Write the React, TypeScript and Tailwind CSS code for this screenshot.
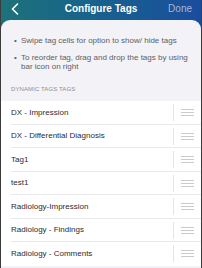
import React from 'react';

const tags = [
  'DX - Impression',
  'DX - Differential Diagnosis',
  'Tag1',
  'test1',
  'Radiology-Impression',
  'Radiology - Findings',
  'Radiology - Comments',
];

const DragHandle: React.FC = () => (
  <svg width="13" height="7" viewBox="0 0 13 7" className="block">
    <rect x="0" y="0" width="13" height="1" fill="#c9c9ce" />
    <rect x="0" y="3" width="13" height="1" fill="#c9c9ce" />
    <rect x="0" y="6" width="13" height="1" fill="#c9c9ce" />
  </svg>
);

export default function App() {
  return (
    <div
      className="w-[202px] h-[268px] overflow-hidden bg-gradient-to-r from-[#1e727a] to-[#1b4c9e] border-x border-[#3c3c3c]"
      style={{ fontFamily: '"Liberation Sans", Arial, sans-serif' }}
    >
      {/* header */}
      <div className="relative h-[20px] flex items-center justify-center">
        <svg width="8" height="12" viewBox="0 0 8 12" className="absolute left-[10px] top-[3px]">
          <path d="M6.5 1 L1.5 6 L6.5 11" fill="none" stroke="#ffffff" strokeWidth="1.6" strokeLinecap="round" strokeLinejoin="round" />
        </svg>
        <span className="text-white font-bold text-[10px] leading-none mt-[-2px]">Configure Tags</span>
        <span className="absolute right-[9px] top-[4px] text-[#a7b6d4] text-[10px] leading-none">Done</span>
      </div>

      {/* sheet */}
      <div className="h-[248px] bg-[#f2f2f7] rounded-t-[9px] overflow-hidden">
        <div className="pt-[16px] pl-[13px] pr-[8px] text-[8px] leading-[9px] text-[#606066]">
          <div className="flex">
            <span className="w-[7px] shrink-0">•</span>
            <span>Swipe tag cells for option to show/ hide tags</span>
          </div>
          <div className="flex mt-[8px]">
            <span className="w-[7px] shrink-0">•</span>
            <span>To reorder tag, drag and drop the tags by using bar icon on right</span>
          </div>
        </div>
        <div className="mt-[15px] pl-[10px] text-[6px] leading-none text-[#8e8e93] tracking-[0.1px]">
          DYNAMIC TAGS TAGS
        </div>
        <div className="mt-[9px] bg-white">
          {tags.map((t, i) => (
            <div key={i} className="h-[23.5px] flex items-center relative">
              <span className="pl-[10px] flex-1 text-[8px] text-[#2c2c2e] leading-none">{t}</span>
              <div className="w-px h-[17px] bg-[#e3e3e8]" />
              <div className="w-[27px] flex justify-center">
                <DragHandle />
              </div>
              {i < tags.length - 1 && (
                <div className="absolute left-[10px] right-0 bottom-0 h-px bg-[#e8e8ed]" />
              )}
            </div>
          ))}
        </div>
      </div>
    </div>
  );
}
